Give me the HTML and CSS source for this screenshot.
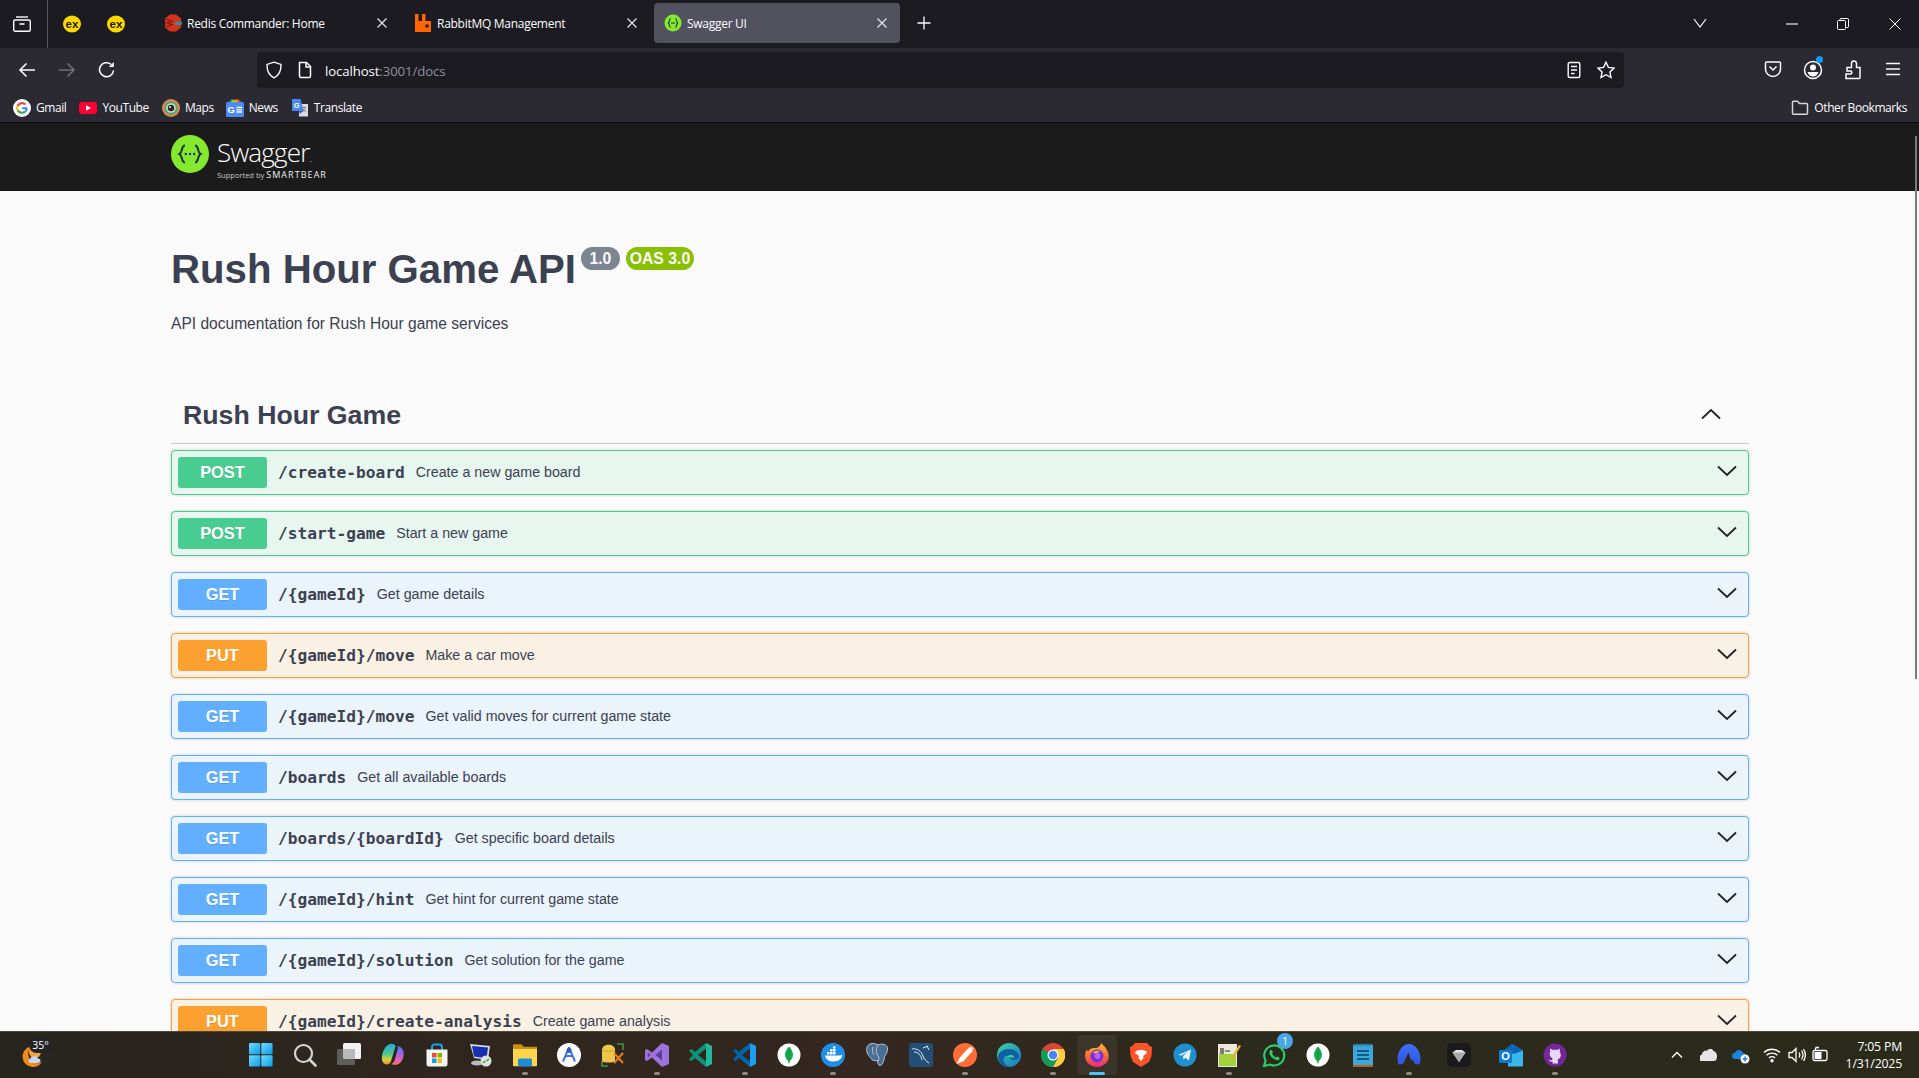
FILE: index.html
```html
<!DOCTYPE html>
<html lang="en">
<head>
<meta charset="utf-8">
<title>Swagger UI</title>
<link rel="stylesheet" href="styles.css">
</head>
<body>
<svg class="defs" width="0" height="0" aria-hidden="true">
  <defs>
    <symbol id="ex" viewBox="0 0 18 18"><ellipse cx="9" cy="9" rx="9" ry="8.600" fill="#ffd800"/><text x="9" y="12.600" text-anchor="middle" font-family="Liberation Sans" font-size="11.500" font-weight="700" fill="#1c1b22">ex</text></symbol>
    <symbol id="close" viewBox="0 0 12 12"><path d="M1.500 1.500l9 9M10.500 1.500l-9 9" stroke="#e4e4ea" stroke-width="1.200" fill="none"/></symbol>
    <symbol id="chev" viewBox="0 0 20 12"><path d="M1 1.500l9 8.500 9-8.500" stroke="#222" stroke-width="1.800" fill="none"/></symbol>
    <symbol id="mongo" viewBox="0 0 24 24"><circle cx="12" cy="12" r="11.500" fill="#fff"/><path d="M12 3.500c2.700 3 4 5.600 4 8.300 0 3-1.600 5.200-3.400 6.300l-.3 2.400h-.7l-.3-2.400C9.600 17 8 14.800 8 11.800 8 9.100 9.300 6.500 12 3.500z" fill="#13aa52"/><path d="M12 4v16" stroke="#0c7a3b" stroke-width=".5"/></symbol>
    <linearGradient id="win" x1="0" y1="0" x2="1" y2="1"><stop offset="0" stop-color="#6fdcff"/><stop offset="1" stop-color="#0b9be8"/></linearGradient>
    <linearGradient id="cop" x1="0" y1="0" x2="0" y2="1"><stop offset="0" stop-color="#1fa8e8"/><stop offset=".5" stop-color="#4fc98a"/><stop offset=".75" stop-color="#d9d03c"/><stop offset="1" stop-color="#f08a3c"/></linearGradient>
    <linearGradient id="cop2" x1="0" y1="0" x2="0" y2="1"><stop offset="0" stop-color="#4a80ea"/><stop offset=".45" stop-color="#a860e6"/><stop offset=".8" stop-color="#ee5fa8"/><stop offset="1" stop-color="#f8824c"/></linearGradient>
    <linearGradient id="edge" x1="0" y1="0" x2="1" y2="1"><stop offset="0" stop-color="#3fd39a"/><stop offset="1" stop-color="#1477c4"/></linearGradient>
    <linearGradient id="fox" x1="0" y1="0" x2="0" y2="1"><stop offset="0" stop-color="#ffbd2e"/><stop offset=".55" stop-color="#ff6a3a"/><stop offset="1" stop-color="#e8287e"/></linearGradient>
    <linearGradient id="nord" x1="0" y1="0" x2="0" y2="1"><stop offset="0" stop-color="#3e6ff5"/><stop offset="1" stop-color="#2f55e0"/></linearGradient>
  </defs>
</svg>

<div class="window">
  <header class="tabbar">
    <div class="tab-toggle">
      <svg class="i18" viewBox="0 0 18 18" fill="none" stroke="#fbfbfe" stroke-width="1.400"><path d="M3 2h12"/><rect x=".7" y="5" width="16.600" height="11.300" rx="1.500"/><path d="M6.500 9h5" stroke-width="1.600"/></svg>
    </div>
    <div class="pinned"><svg class="i18" aria-hidden="true"><use href="#ex"/></svg></div>
    <div class="pinned"><svg class="i18" aria-hidden="true"><use href="#ex"/></svg></div>
    <div class="tabs">
      <div class="tab">
        <svg class="tab-icon" viewBox="0 0 18 18"><path d="M6 .5h6l5 4v9l-5 4H6l-5-4v-9z" fill="#d8321f"/><path d="M2 5l6 2.500L3 9l5 1.500L2 13" stroke="#7d1c12" stroke-width="1.300" fill="none"/><rect x="11" y="7.500" width="7" height="3.500" rx="1" fill="#3d8a96"/></svg>
        <span class="tab-title">Redis Commander: Home</span>
        <svg class="tab-close" aria-hidden="true"><use href="#close"/></svg>
      </div>
      <div class="tab">
        <svg class="tab-icon" viewBox="0 0 18 18"><path d="M1 0h3.500v7H8V0h3.500v7H17v11H1z" fill="#f60"/><rect x="11.500" y="10.500" width="3" height="3" fill="#1c1b22"/></svg>
        <span class="tab-title">RabbitMQ Management</span>
        <svg class="tab-close" aria-hidden="true"><use href="#close"/></svg>
      </div>
      <div class="tab tab-active">
        <svg class="tab-icon" viewBox="0 0 18 18"><circle cx="9" cy="9" r="8.500" fill="#85ea2d"/><path d="M6.800 4.500C5 4.500 5.600 8 4.500 9c1.100 1 .5 4.500 2.300 4.500M11.200 4.500C13 4.500 12.400 8 13.500 9c-1.100 1-.5 4.500-2.300 4.500M7 9h4" stroke="#173647" stroke-width="1.100" fill="none"/></svg>
        <span class="tab-title">Swagger UI</span>
        <svg class="tab-close" aria-hidden="true"><use href="#close"/></svg>
      </div>
    </div>
    <div class="tab-plus"><svg class="i14" viewBox="0 0 14 14"><path d="M7 .5v13M.5 7h13" stroke="#fbfbfe" stroke-width="1.300"/></svg></div>
    <div class="tab-list"><svg class="i14" viewBox="0 0 14 14"><path d="M1 3l6 8 6-8" stroke="#fbfbfe" stroke-width="1.200" fill="none"/></svg></div>
    <div class="win-ctl"><svg class="i12" viewBox="0 0 12 12"><path d="M0 6h12" stroke="#fff" stroke-width="1.100"/></svg></div>
    <div class="win-ctl"><svg class="i12" viewBox="0 0 12 12" fill="none" stroke="#fff" stroke-width="1"><rect x=".5" y="2.500" width="8" height="9" rx="1"/><path d="M3 2.500V1.200c0-.4.300-.7.700-.7h7c.4 0 .8.300.8.700v7.600c0 .4-.4.700-.8.700H8.500"/></svg></div>
    <div class="win-ctl"><svg class="i12" viewBox="0 0 12 12"><path d="M.5.500l11 11M11.500.500l-11 11" stroke="#fff" stroke-width="1"/></svg></div>
  </header>

  <nav class="navbar">
    <div class="nav-btn"><svg class="i18" viewBox="0 0 18 18" fill="none" stroke="#fbfbfe" stroke-width="1.600"><path d="M17 9H2M8.500 2.500L2 9l6.500 6.500"/></svg></div>
    <div class="nav-btn"><svg class="i18" viewBox="0 0 18 18" fill="none" stroke="#6f6f78" stroke-width="1.600"><path d="M1 9h15M9.500 2.500L16 9l-6.500 6.500"/></svg></div>
    <div class="nav-btn"><svg class="i18" viewBox="0 0 18 18" fill="none" stroke="#fbfbfe" stroke-width="1.600"><path d="M15.500 9.500A7 7 0 1 1 13 3.300"/><path d="M15.800 1v5h-5z" fill="#fbfbfe" stroke="none"/></svg></div>
    <div class="urlbar">
      <svg class="i18" viewBox="0 0 18 18" fill="none" stroke="#fbfbfe" stroke-width="1.400"><path d="M9 1.200l7 2.200c.2 6.500-2 11-7 13.400C4 14.400 1.800 9.900 2 3.400z"/></svg>
      <svg class="i18 url-page" viewBox="0 0 18 18" fill="none" stroke="#fbfbfe" stroke-width="1.500"><path d="M3.500 1.500h7l4 4v9.500a1.500 1.500 0 0 1-1.500 1.500H5A1.500 1.500 0 0 1 3.500 15z"/><path d="M10 1.500v4.500h4.500" /></svg>
      <span class="url-text">localhost<span class="url-dim">:3001/docs</span></span>
      <svg class="i18 url-reader" viewBox="0 0 18 18" fill="none" stroke="#fbfbfe" stroke-width="1.400"><rect x="3.200" y="1.500" width="11.600" height="15" rx="1.500"/><path d="M6 5.500h6M6 9h6M6 12.500h3.500" stroke-width="1.600"/></svg>
      <svg class="i18 url-star" viewBox="0 0 18 18" fill="none" stroke="#fbfbfe" stroke-width="1.400"><path d="M9 1.200l2.400 5.200 5.700.7-4.200 3.800 1.100 5.600L9 13.700l-5 2.800 1.100-5.600L.9 7.100l5.700-.7z"/></svg>
    </div>
    <div class="nav-right">
      <div class="nav-btn"><svg class="i18" viewBox="0 0 18 18" fill="none" stroke="#fbfbfe" stroke-width="1.500"><path d="M2.500 2h13c.6 0 1 .4 1 1v6a7.500 7.500 0 0 1-15 0V3c0-.6.400-1 1-1z"/><path d="M5.500 6.500L9 10l3.500-3.500"/></svg></div>
      <div class="nav-btn nav-account"><svg class="i20" viewBox="0 0 20 20" fill="none"><circle cx="10" cy="10" r="8.500" stroke="#fbfbfe" stroke-width="1.500"/><circle cx="10" cy="7.500" r="3" fill="#fbfbfe"/><path d="M4.500 12h11c-.8 3-3 4.600-5.500 4.600S5.300 15 4.500 12z" fill="#fbfbfe"/></svg></div>
      <div class="nav-btn"><svg class="i20" viewBox="0 0 20 20" fill="none" stroke="#fbfbfe" stroke-width="1.500"><path d="M3 18.500h13c.6 0 1-.4 1-1V7.500h-3.500V3.500a2.500 2.500 0 0 0-5 0v4H4v3.500h3.500c1.800 0 1.800 3 0 3H3z"/></svg></div>
      <div class="nav-btn"><svg class="i18" viewBox="0 0 18 18" stroke="#fbfbfe" stroke-width="1.500"><path d="M2 3.500h14M2 9h14M2 14.500h14"/></svg></div>
    </div>
  </nav>

  <div class="bookmarks">
    <div class="bm">
      <svg class="i18" viewBox="0 0 18 18"><circle cx="9" cy="9" r="9" fill="#fff"/><path d="M14 9.200H9.200" stroke="#4285f4" stroke-width="2.100"/><path d="M13.800 9.200a4.900 4.900 0 0 1-2 3.700" stroke="#4285f4" stroke-width="2.100" fill="none"/><path d="M11.800 12.900A5 5 0 0 1 4.600 11.200" stroke="#34a853" stroke-width="2.100" fill="none"/><path d="M4.600 11.200a5 5 0 0 1 0-4.400" stroke="#fbbc05" stroke-width="2.100" fill="none"/><path d="M4.600 6.800A5 5 0 0 1 12.400 5.500" stroke="#ea4335" stroke-width="2.100" fill="none"/></svg>
      <span>Gmail</span>
    </div>
    <div class="bm">
      <svg class="i18" viewBox="0 0 18 18"><rect y="3" width="18" height="12" rx="3" fill="#ff0033"/><path d="M7 6.200L12 9l-5 2.800z" fill="#fff"/></svg>
      <span>YouTube</span>
    </div>
    <div class="bm">
      <svg class="i18" viewBox="0 0 18 18"><circle cx="9" cy="9" r="9" fill="#e08a45"/><circle cx="9" cy="9" r="6.800" fill="#4aa58a"/><circle cx="9" cy="9" r="4.800" fill="#e2d3a8"/><circle cx="9" cy="9" r="3.200" fill="#1e2c30"/><circle cx="8" cy="8" r=".9" fill="#fff"/></svg>
      <span>Maps</span>
    </div>
    <div class="bm bm-news">
      <svg class="i18" viewBox="0 0 18 18"><path d="M3 3l2-2.500h7L15 3z" fill="#34a853"/><path d="M9 .5h3.500L15 3H9z" fill="#ea4335"/><path d="M6 1.500h6V3H6z" fill="#fbbc05"/><rect y="3" width="18" height="15" rx="1.500" fill="#4b8bf5"/><text x="5" y="14" text-anchor="middle" font-family="Liberation Sans" font-size="9.500" font-weight="700" fill="#fff">G</text><path d="M10.500 8.500H16M10.500 10.800H16M10.500 13H16" stroke="#fff" stroke-width="1.300"/></svg>
      <span>News</span>
    </div>
    <div class="bm">
      <svg class="i18" viewBox="0 0 18 18"><path d="M8 5h9v12.500H8z" fill="#d9dbe0"/><path d="M11 8.500h4M13 7.500v1M11.500 13l3-3.500M12 10l3 3" stroke="#777" stroke-width=".9" fill="none"/><path d="M1 0h8.500l3 12H1z" fill="#4a88f0"/><text x="5.500" y="8.500" text-anchor="middle" font-family="Liberation Sans" font-size="7.500" font-weight="700" fill="#fff">G</text><path d="M8 12l1 3 3-3z" fill="#2f5fbd"/></svg>
      <span>Translate</span>
    </div>
    <div class="bm bm-other">
      <svg class="i18" viewBox="0 0 18 18" fill="none" stroke="#d7d7db" stroke-width="1.500"><path d="M1.500 3.200c0-.6.400-1 1-1h3.800l2.200 2.200h7c.6 0 1 .4 1 1v8.800c0 .6-.4 1-1 1h-13c-.6 0-1-.4-1-1z"/></svg>
      <span>Other Bookmarks</span>
    </div>
  </div>

  <main class="viewport">
    <div class="topbar">
      <svg class="logo-mark" viewBox="0 0 38 38"><circle cx="19" cy="19" r="19" fill="#85ea2d"/><path d="M14 10.500c-4 0-2.300 7-5.500 8.500 3.200 1.500 1.500 8.500 5.500 8.500M24 10.500c4 0 2.300 7 5.500 8.500-3.200 1.500-1.500 8.500-5.500 8.500" stroke="#173647" stroke-width="2" fill="none"/><circle cx="14.800" cy="19" r="1.200" fill="#173647"/><circle cx="19" cy="19" r="1.200" fill="#173647"/><circle cx="23.200" cy="19" r="1.200" fill="#173647"/></svg>
      <div class="logo-text">
        <div class="logo-name">Swagger<span class="logo-tm">.</span></div>
        <div class="logo-sub"><span class="logo-by">Supported by</span><span class="logo-sb">SMARTBEAR</span></div>
      </div>
    </div>

    <div class="content">
      <div class="info">
        <h1 class="title">Rush Hour Game API</h1>
        <span class="pill pill-ver">1.0</span>
        <span class="pill pill-oas">OAS 3.0</span>
      </div>
      <p class="desc">API documentation for Rush Hour game services</p>

      <div class="tag">
        <h2 class="tag-name">Rush Hour Game</h2>
        <svg class="tag-chev" viewBox="0 0 20 12"><path d="M1 10.500l9-8.500 9 8.500" stroke="#222" stroke-width="1.800" fill="none"/></svg>
      </div>

      <div class="op op-post"><span class="method">POST</span><span class="path">/create-board</span><span class="summary">Create a new game board</span><svg class="op-chev" aria-hidden="true"><use href="#chev"/></svg></div>
      <div class="op op-post"><span class="method">POST</span><span class="path">/start-game</span><span class="summary">Start a new game</span><svg class="op-chev" aria-hidden="true"><use href="#chev"/></svg></div>
      <div class="op op-get"><span class="method">GET</span><span class="path">/{gameId}</span><span class="summary">Get game details</span><svg class="op-chev" aria-hidden="true"><use href="#chev"/></svg></div>
      <div class="op op-put"><span class="method">PUT</span><span class="path">/{gameId}/move</span><span class="summary">Make a car move</span><svg class="op-chev" aria-hidden="true"><use href="#chev"/></svg></div>
      <div class="op op-get"><span class="method">GET</span><span class="path">/{gameId}/move</span><span class="summary">Get valid moves for current game state</span><svg class="op-chev" aria-hidden="true"><use href="#chev"/></svg></div>
      <div class="op op-get"><span class="method">GET</span><span class="path">/boards</span><span class="summary">Get all available boards</span><svg class="op-chev" aria-hidden="true"><use href="#chev"/></svg></div>
      <div class="op op-get"><span class="method">GET</span><span class="path">/boards/{boardId}</span><span class="summary">Get specific board details</span><svg class="op-chev" aria-hidden="true"><use href="#chev"/></svg></div>
      <div class="op op-get"><span class="method">GET</span><span class="path">/{gameId}/hint</span><span class="summary">Get hint for current game state</span><svg class="op-chev" aria-hidden="true"><use href="#chev"/></svg></div>
      <div class="op op-get"><span class="method">GET</span><span class="path">/{gameId}/solution</span><span class="summary">Get solution for the game</span><svg class="op-chev" aria-hidden="true"><use href="#chev"/></svg></div>
      <div class="op op-put"><span class="method">PUT</span><span class="path">/{gameId}/create-analysis</span><span class="summary">Create game analysis</span><svg class="op-chev" aria-hidden="true"><use href="#chev"/></svg></div>
    </div>
    <div class="scrollthumb"></div>
  </main>

  <footer class="taskbar">
    <div class="weather">
      <svg class="i24" viewBox="0 0 24 24"><path d="M11 3a10.500 10.500 0 1 0 9 16A9 9 0 0 1 11 3z" fill="#f08a1d"/><circle cx="13" cy="9" r="6" fill="#f5a53a"/><path d="M9 20c-2.500 0-3.500-3.500-.5-4.500.5-3 6.500-3 7.500 0 3.500 0 3.500 4.500 0 4.500z" fill="#c5d9f2"/></svg>
      <span class="weather-temp">35°</span>
    </div>
    <div class="dock">
      <div class="slot"><svg class="i24" viewBox="0 0 24 24" fill="url(#win)"><rect width="11.300" height="11.300" rx="1"/><rect x="12.300" width="11.300" height="11.300" rx="1"/><rect y="12.300" width="11.300" height="11.300" rx="1"/><rect x="12.300" y="12.300" width="11.300" height="11.300" rx="1"/></svg></div>
      <div class="slot"><svg class="i24" viewBox="0 0 24 24" fill="none" stroke="#d6d6d6" stroke-width="2.200"><circle cx="10.500" cy="10.500" r="8.500"/><path d="M16.500 16.500l6 6" stroke-width="2.600" stroke-linecap="round"/></svg></div>
      <div class="slot"><svg class="i24" viewBox="0 0 24 24"><rect x="6" y="0" width="18" height="16" rx="1.500" fill="#f2f2f2"/><rect x="0" y="6" width="18" height="16" rx="1.500" fill="#5e5e5e"/><rect x="6" y="6" width="12" height="10" rx="1" fill="#b9b9b9"/></svg></div>
      <div class="slot"><svg class="i24" viewBox="0 0 24 24"><path d="M7 2c3-2 7-1.500 7.500 1.500L10 18c-.7 2.500-2.500 4-5 3.500C1.500 20.500.5 17 1 13 1.500 8 4 4 7 2z" fill="url(#cop)"/><path d="M14 3c3-.5 6.500.5 8 4 1.500 4 .5 9.500-2.500 12.500-2.500 2.500-6 3-9 1.500 2-1 3-3 3.500-5l3-11C17.500 3.700 16 3 14 3z" fill="url(#cop2)"/></svg></div>
      <div class="slot"><svg class="i24" viewBox="0 0 24 24"><path d="M7 7V4a2.500 2.500 0 0 1 2.500-2.500h5A2.500 2.500 0 0 1 17 4v3" stroke="#1aa3e8" stroke-width="2" fill="none"/><path d="M1.500 6.500h21V21a2.500 2.500 0 0 1-2.500 2.500H4A2.500 2.500 0 0 1 1.500 21z" fill="#f4f4f4"/><rect x="7" y="10" width="4.500" height="4.500" fill="#f25022"/><rect x="12.500" y="10" width="4.500" height="4.500" fill="#7fba00"/><rect x="7" y="15.500" width="4.500" height="4.500" fill="#00a4ef"/><rect x="12.500" y="15.500" width="4.500" height="4.500" fill="#ffb900"/></svg></div>
      <div class="slot"><svg class="i24" viewBox="0 0 24 24"><path d="M1 1l20 2-2 14-14-2z" fill="#d5dae6"/><path d="M3 3l16 1.500-1.500 11L5 13.500z" fill="#1a2fb0"/><ellipse cx="8" cy="20" rx="6" ry="2.500" fill="#bbb"/><circle cx="17" cy="18" r="5.500" fill="#dfe3e0"/><path d="M14 20l2.500-2M20 16l-2.500 2" stroke="#2e9e4a" stroke-width="1.300"/></svg></div>
      <div class="slot run"><svg class="i24" viewBox="0 0 24 24"><path d="M0 2.500c0-.8.500-1.300 1.300-1.300h7l2.500 2.500h13.200V23H0z" fill="#c98f10"/><path d="M0 6h24v16c0 .8-.5 1.300-1.300 1.300H1.300C.5 23.300 0 22.800 0 22z" fill="#fdd64b"/><rect x="5" y="15.500" width="14" height="7.800" rx="1.500" fill="#1c8fd8"/></svg></div>
      <div class="slot"><svg class="i24" viewBox="0 0 24 24"><circle cx="12" cy="12" r="12" fill="#fff"/><path d="M12 4.500l-6 14M12 4.500l6 14M8 13h8" stroke="#3f75dd" stroke-width="2" fill="none"/><circle cx="12" cy="7.500" r="2.500" fill="#2f5fbd"/></svg></div>
      <div class="slot"><svg class="i24" viewBox="0 0 24 24"><path d="M1 7c0-7 13-7 13 0v11c0 2-13 2-13 0z" fill="#eec64a"/><path d="M1 6c0 3 13 3 13 0" stroke="#c9a02c" fill="none"/><path d="M16 1h6v6M1 18v5h6" stroke="#3e9a3e" stroke-width="1.600" fill="none"/><path d="M13 10l9 10M22 10l-9 10" stroke="#e37a1e" stroke-width="2.200"/></svg></div>
      <div class="slot run"><svg class="i24" viewBox="0 0 24 24"><path d="M17 0l7 3v18l-7 3-10-9.500L2 18l-2-1V7l2-1 5 3.500z" fill="#9b73d9"/><path d="M17 6.500L10.500 12l6.500 5.500zM2.800 9.500v5L5.500 12z" fill="#5b3a9e"/></svg></div>
      <div class="slot"><svg class="i24" viewBox="0 0 24 24"><path d="M17 0l6 3v18l-6 3z" fill="#1fb89a"/><path d="M17 0v5.500L9 12l8 6.500V24L6 15l-3.500 3L0 16.500 4 12 0 7.500 2.500 6 6 9z" fill="#0d9379"/></svg></div>
      <div class="slot run"><svg class="i24" viewBox="0 0 24 24"><path d="M17 0l6 3v18l-6 3z" fill="#1f9cf0"/><path d="M17 0v5.500L9 12l8 6.500V24L6 15l-3.500 3L0 16.500 4 12 0 7.500 2.500 6 6 9z" fill="#0065a9"/></svg></div>
      <div class="slot"><svg class="i24" aria-hidden="true"><use href="#mongo"/></svg></div>
      <div class="slot run"><svg class="i24" viewBox="0 0 24 24"><circle cx="12" cy="12" r="12" fill="#1d8fe8"/><path d="M4 12.500h14.500c1 0 2-.5 2.500-1 .5 3-2.500 7-8 7-5 0-8-2-9-6z" fill="#fff"/><path d="M6 9h2.500v2.500H6zM9 9h2.500v2.500H9zM12 9h2.500v2.500H12zM9 6h2.500v2.500H9zM12 6h2.500v2.500H12zM12 3.500h2.500V5.500H12z" fill="#fff"/></svg></div>
      <div class="slot"><svg class="i24" viewBox="0 0 24 24" fill="#4a6f94" stroke="#b9c7d6" stroke-width="1"><path d="M5 1c3-1 6-.5 8 1 3-1.500 7.500-1 9 1.500 1.500 3-.5 8-2.500 10-.3 4-2 9-4.500 9-2 0-2.500-3-2.500-5-3 .5-5.500 0-6.500-2-1-1.500-1.500-2-3-4C1 8 1 2.500 5 1z"/><path d="M13 2c-2 3-2.500 7 0 11 1 1.500 1 3 .5 5M8 4c-1 3-.5 6 1 8" fill="none"/></svg></div>
      <div class="slot"><svg class="i24" viewBox="0 0 24 24"><rect width="24" height="24" rx="3" fill="#234e75"/><path d="M3 6c5-1 9 2 11 7 1 3 3 5 6 7M5 9c4 0 7 3 8 8M14 5l5-2M18 3l2 4" stroke="#e2ecf5" stroke-width="1" fill="none"/></svg></div>
      <div class="slot run"><svg class="i24" viewBox="0 0 24 24"><circle cx="12" cy="12" r="12" fill="#ff6c37"/><path d="M5 19.500l5-2 9-10-2.500-2.500-9 10zM18 4l2 2" stroke="#fff" stroke-width="1.500" fill="#fff"/></svg></div>
      <div class="slot"><svg class="i24" viewBox="0 0 24 24"><circle cx="12" cy="12" r="12" fill="url(#edge)"/><path d="M1 13C3 5 18 3 22 12c1 3-2 5-5 5-4 0-3-3-5-4-3-1-6 1-5.500 4 .5 3 3 6 7 7C7 25 1 21 1 13z" fill="#0f5ea8"/><path d="M10 14c2-3 7-2 7 0 0 1-2 1-3 0z" fill="#3fd39a"/></svg></div>
      <div class="slot run"><svg class="i24" viewBox="0 0 24 24"><circle cx="12" cy="12" r="12" fill="#db4437"/><path d="M12 12L1.600 6A12 12 0 0 0 12 24l5-9z" fill="#0f9d58"/><path d="M12 6h10.700A12 12 0 0 1 12 24l5.200-9z" fill="#ffcd40"/><circle cx="12" cy="12" r="5.500" fill="#fff"/><circle cx="12" cy="12" r="4.300" fill="#4285f4"/></svg></div>
      <div class="slot slot-active"><svg class="i24" viewBox="0 0 24 24"><path d="M16.500 0c.5 2 3 3 4.500 5.500 3 4 3.500 9.500 1.500 12.500C20 22 16 24 12 24 5 24 0 19 0 12.500c0-2.500 1-5 2-6 0 1 .5 1.500 1.500 1.500C5 5 8 5 10 5c2 .5 5-1 6.500-5z" fill="url(#fox)"/><circle cx="12" cy="13" r="6.500" fill="#7a2fd0"/><path d="M8 10c1-2.500 5-3 7-1-2 0-3 1-3.500 1.500z" fill="#ffb02e"/><circle cx="12.500" cy="13" r="3" fill="#b562ff"/></svg></div>
      <div class="slot"><svg class="i24" viewBox="0 0 24 24"><path d="M6 0h12l2.500 3L23 4l-.5 9L20 19l-8 5-8-5-2.500-6L1 4l2.500-1z" fill="#fb542b"/><path d="M7 8l3-1h4l3 1 1 2-4 3 .5 2L12 18l-2.500-3 .5-2-4-3z" fill="#fff"/></svg></div>
      <div class="slot"><svg class="i24" viewBox="0 0 24 24"><circle cx="12" cy="12" r="11.500" fill="#1f8fd0"/><path d="M5 12l13-5.500-2 11-3.700-2.800-1.800 2-.5-3.600 5-4.600-6.500 4z" fill="#e7f3fa"/></svg></div>
      <div class="slot run"><svg class="i24" viewBox="0 0 24 24"><path d="M1 1h19v23H1z" fill="#ece9d8"/><path d="M2 11h17v12H2z" fill="#9fd13f"/><path d="M4 5v6M6 5v6M8 8h5" stroke="#333" stroke-width="1.200"/><path d="M22 2L14 15l-1 3 3-2 8-13z" fill="#e9b13b"/></svg></div>
      <div class="slot slot-wa">
        <svg class="i24" viewBox="0 0 24 24" fill="none"><path d="M2 23l1.600-5.500A10 10 0 1 1 8 21.500z" stroke="#25d366" stroke-width="2.100"/><path d="M8 7.500c-1.500 2 0 5.500 3 7.800s5.500 2.500 6.500 1c.6-1-.2-1.800-2-2.800l-1.500 1c-2-1-3-2-4-4l1-1.500C10 7.500 9 6.300 8 7.500z" fill="#25d366"/></svg>
        <span class="wa-badge">1</span>
      </div>
      <div class="slot"><svg class="i24" aria-hidden="true"><use href="#mongo"/></svg></div>
      <div class="slot slot-g1"><svg class="i24" viewBox="0 0 24 24"><rect x="2" y="1.500" width="20" height="22.500" rx="1" fill="#3fa6d8"/><rect x="2" y="22" width="20" height="2" fill="#b5651d"/><path d="M3.500.500v3M6.500.500v3M9.500.500v3M12.500.500v3M15.500.500v3M18.500.500v3" stroke="#1f7fb0" stroke-width="1.200"/><path d="M6 8h12M6 12h12M6 16h12" stroke="#0f5d8a" stroke-width="2"/></svg></div>
      <div class="slot run slot-g2"><svg class="i24" viewBox="0 0 24 24"><path d="M1.500 21.500C-2 12 4 1 12 1s14 11 10.500 20.500L18 21l-3-5-1 1.500L11.500 9.500 6 21z" fill="url(#nord)"/></svg></div>
      <div class="slot slot-g3"><svg class="i24" viewBox="0 0 24 24"><rect width="24" height="24" rx="5" fill="#1a1a1d"/><path d="M5.500 9.500L9 7h6l3.500 2.500L12 19z" fill="#e7e7e7"/><path d="M5.500 9.500h13L12 19z" fill="#a9a9a9"/></svg></div>
      <div class="slot slot-g4"><svg class="i24" viewBox="0 0 24 24"><path d="M13 1l11 6.500V22c0 1-.5 1.500-1.500 1.500H9V15H6V7z" fill="#38b8ea"/><path d="M13 1L6 7l9 4 9-3.500z" fill="#0b64b8"/><rect y="7" width="13" height="13" rx="1.500" fill="#0f7ad0"/><text x="6.500" y="17" text-anchor="middle" font-family="Liberation Sans" font-size="11" font-weight="700" fill="#fff">O</text></svg></div>
      <div class="slot run"><svg class="i24" viewBox="0 0 24 24"><circle cx="12" cy="12" r="11.500" fill="#74269a"/><path d="M7.500 5.500L10 7c1.300-.3 2.700-.3 4 0l2.500-1.500c.5 1.300.5 2.500.2 3.500 2 2 1.500 6.500-2.200 7.500.7.700.5 2 .5 4h-5.500c0-1 0-1.500.2-2-1.700.5-3 0-4-2 1.300.3 2.500 1 3.300.5.100-.7.200-1 .7-1.500C6.500 14 6 10 7.300 9c-.3-1-.3-2.200.2-3.500z" fill="#e8d8f0"/></svg></div>
    </div>
    <div class="tray">
      <svg class="i12" viewBox="0 0 12 12" fill="none" stroke="#fff" stroke-width="1.300"><path d="M1 8.500l5-5 5 5"/></svg>
      <svg class="i18 tray-cloud" viewBox="0 0 18 18"><path d="M2 15a3 3 0 0 1-.5-6c.5-3 3-5 6-4.500 1-2 5-2 6 .5 2.500.5 3.500 3 3.500 5 0 3-1 5-3 5z" fill="#e5e5e5"/></svg>
      <svg class="i18 tray-od" viewBox="0 0 18 18"><path d="M3 13a3 3 0 0 1 0-6c.5-3 6-5 8 0 3 0 4 4 1 6z" fill="#1c84e0"/><circle cx="13" cy="13" r="4.500" fill="#fff"/><path d="M10.500 13h5M13 10.500v5" stroke="#1c84e0" stroke-width="1.500"/></svg>
      <svg class="i18 tray-wifi" viewBox="0 0 18 18" fill="none" stroke="#fff" stroke-width="1.400"><path d="M1 6.500a11.500 11.500 0 0 1 16 0M3.500 9.300a8 8 0 0 1 11 0M6 12a4.300 4.300 0 0 1 6 0"/><circle cx="9" cy="14.800" r="1" fill="#fff"/></svg>
      <svg class="i18 tray-vol" viewBox="0 0 18 18" fill="none" stroke="#fff" stroke-width="1.300"><path d="M1 6.500h3l4-4v13l-4-4H1zM11 6.500c1 1.500 1 3.500 0 5M13.500 4.500c2 3 2 6 0 9M15.500 3c2.500 4 2.500 8 0 12"/></svg>
      <svg class="i18 tray-bat" viewBox="0 0 18 18" fill="none" stroke="#fff" stroke-width="1.300"><rect x="2" y="4.500" width="14" height="10" rx="1.500"/><rect x="3.500" y="6" width="7" height="7" fill="#fff" stroke="none"/><path d="M4 4.500l1-3h3"/></svg>
      <div class="clock"><span>7:05 PM</span><span>1/31/2025</span></div>
    </div>
  </footer>
</div>
</body>
</html>
```

FILE: styles.css
```css
* { box-sizing: border-box; }
html, body { margin: 0; padding: 0; height: 100%; overflow: hidden; }
body { background: #1c1b22; font-family: "Liberation Sans", Arial, sans-serif; }
svg { display: block; flex: none; }
.defs { position: absolute; }
.i12 { width: 12px; height: 12px; }
.i14 { width: 14px; height: 14px; }
.i18 { width: 18px; height: 18px; }
.i20 { width: 20px; height: 20px; }
.i24 { width: 24px; height: 24px; }

.window { display: flex; flex-direction: column; height: 1078px; width: 1919px; }

/* tab strip */
.tabbar { display: flex; align-items: center; height: 48px; padding-bottom: 2px; background: #1c1b22; flex: none; color: #fbfbfe; font-family: "Open Sans", sans-serif; font-size: 12px; }
.tab-toggle { width: 48px; height: 48px; margin-bottom: -2px; display: flex; align-items: center; justify-content: center; border-right: 1px solid #55545c; padding-right: 3px; }
.pinned { width: 44px; display: flex; justify-content: center; margin-bottom: -2px; }
.pinned:nth-child(2) { margin-left: 2px; }
.tabs { display: flex; gap: 4px; margin-left: 16px; }
.tab { width: 246px; height: 40px; display: flex; align-items: center; padding: 0 12px 0 10px; border-radius: 4px; }
.tab-active { background: #52525e; }
.tab-icon { width: 18px; height: 18px; }
.tab-title { margin-left: 5px; flex: 1; white-space: nowrap; letter-spacing: -.28px; }
.tab-close { width: 12px; height: 12px; }
.tab-plus { width: 48px; display: flex; justify-content: center; }
.tab-list { width: 40px; margin-left: auto; margin-right: 46px; display: flex; justify-content: center; }
.win-ctl { width: 51px; display: flex; justify-content: center; margin-bottom: -1px; }
.win-ctl:last-child { padding-left: 2px; }

/* toolbar */
.navbar { display: flex; align-items: center; height: 44px; background: #2b2a33; padding-left: 7px; flex: none; }
.nav-btn { width: 40px; display: flex; justify-content: center; position: relative; }
.nav-account::after { content: ""; position: absolute; top: -4px; left: 23px; width: 7px; height: 7px; border-radius: 50%; background: #0a9df5; }
.urlbar { display: flex; align-items: center; height: 36px; width: 1367px; margin-left: 130px; background: #1c1b22; border-radius: 4px; padding: 0 9px 0 8px; color: #fbfbfe; }
.url-page { margin-left: 13px; }
.url-text { margin-left: 11px; margin-top: 2px; font-family: "Open Sans", sans-serif; font-size: 13.200px; letter-spacing: -.1px; }
.url-dim { color: #8f8f9d; }
.url-reader { margin-left: auto; }
.url-star { margin-left: 14px; }
.nav-right { display: flex; margin-left: auto; padding-right: 6px; }

/* bookmarks */
.bookmarks { display: flex; align-items: center; gap: 13px; height: 31px; background: #2b2a33; border-bottom: 1px solid #0c0c0d; padding: 1px 12px 0 13px; flex: none; color: #fbfbfe; font-family: "Open Sans", sans-serif; font-size: 12px; letter-spacing: -.42px; }
.bm { display: flex; align-items: center; gap: 5px; white-space: nowrap; }
.bm-news { margin-left: -1px; }
.bm-other { margin-left: auto; }

/* page */
.viewport { flex: 1; min-height: 0; overflow: hidden; background: #fafafa; position: relative; color: #3b4151; }
.topbar { height: 68px; background: #1b1b1b; display: flex; align-items: flex-start; padding-left: 171px; }
.logo-mark { width: 38px; height: 38px; margin-top: 12px; }
.logo-text { margin-left: 8px; margin-top: 14px; color: #fff; }
.logo-name { font-family: "Open Sans", sans-serif; font-weight: 300; font-size: 26px; line-height: 30px; letter-spacing: -.8px; }
.logo-tm { font-size: 10px; }
.logo-sub { display: flex; align-items: baseline; gap: 2px; margin-top: -3px; line-height: 10px; }
.logo-by { font-family: "Open Sans", sans-serif; font-size: 7.500px; color: #c8c8c8; }
.logo-sb { font-family: "Open Sans", sans-serif; font-weight: 400; font-size: 9px; letter-spacing: 1.050px; color: #eee; }

.content { padding: 0 170px 0 171px; }
.info { display: flex; align-items: flex-start; padding-top: 55px; }
.title { margin: 0; font-size: 40.200px; line-height: 48px; font-weight: 700; white-space: nowrap; }
.pill { display: block; height: 23px; line-height: 23px; border-radius: 12px; color: #fafafa; font-weight: 700; font-size: 15.800px; text-align: center; margin-top: 1px; }
.pill-ver { width: 39px; margin-left: 5px; background: #7d8492; }
.pill-oas { width: 68px; margin-left: 6px; background: #89bf04; }
.desc { margin: 0; font-size: 15.570px; line-height: 20px; padding-top: 20px; }
.tag { display: flex; align-items: center; height: 110px; padding: 52px 20px 0 12px; border-bottom: 1px solid #c8c9cd; margin-bottom: 6px; }
.tag-name { margin: 0; font-size: 26.700px; line-height: 32px; font-weight: 700; }
.tag-chev { width: 20px; height: 12px; margin-left: auto; margin-right: 8px; margin-top: -2px; }

.op { display: flex; align-items: center; height: 44.500px; margin-bottom: 16.500px; padding: 0 10px 0 6px; border: 1.300px solid; border-radius: 4px; box-shadow: 0 0 3px rgba(0,0,0,.19); }
.method { width: 89px; height: 31px; line-height: 31px; border-radius: 3px; color: #fff; text-align: center; font-weight: 700; font-size: 16.400px; text-shadow: 0 1px 0 rgba(0,0,0,.1); }
.path { margin-left: 11px; font-family: "DejaVu Sans Mono", monospace; font-weight: 700; font-size: 16.200px; color: #3b4151; white-space: nowrap; }
.summary { margin-left: 11px; font-size: 14.250px; color: #3b4151; white-space: nowrap; }
.op-chev { width: 20px; height: 12px; margin-left: auto; margin-right: 1px; margin-top: -3px; }
.op-post { background: #e8f6f0; border-color: #49cc90; }
.op-post .method { background: #49cc90; }
.op-get { background: #ebf3fb; border-color: #61affe; }
.op-get .method { background: #61affe; }
.op-put { background: #faf1e5; border-color: #fca130; }
.op-put .method { background: #fca130; }
.scrollthumb { position: absolute; top: 13px; right: 2px; width: 2px; height: 543px; background: #7b7b7b; }

/* taskbar */
.taskbar { display: flex; align-items: center; height: 47px; flex: none; color: #fff; background: linear-gradient(90deg, #28251f 0%, #2f261e 25%, #33271f 45%, #2c2a1c 65%, #2a2a1b 100%); border-top: 1px solid #4a4742; position: relative; }
.weather { position: relative; margin-left: 22px; }
.weather-temp { position: absolute; left: 7px; top: -5px; width: 23px; height: 15px; background: #22242a; border-radius: 8px; text-align: center; font-family: "Open Sans", sans-serif; font-size: 10.500px; line-height: 15px; white-space: nowrap; }
.dock { display: flex; align-items: center; margin-left: 193px; }
.slot { width: 44px; height: 40px; display: flex; align-items: center; justify-content: center; position: relative; border-radius: 4px; }
.run::after { content: ""; position: absolute; left: 19px; bottom: 0; width: 6px; height: 3px; border-radius: 2px; background: #8b8b8b; }
.slot-active { background: rgba(255,255,255,.06); width: 40px; margin: 0 2px; }
.slot-active::after { content: ""; position: absolute; left: 12px; bottom: 0; width: 16px; height: 3px; border-radius: 2px; background: #4cc2ff; }
.slot-wa { margin-left: 1px; }
.slot-g1 { margin-left: 1px; }
.slot-g2 { margin-left: 2px; }
.slot-g3 { margin-left: 6px; }
.slot-g4 { margin-left: 8px; }
.wa-badge { position: absolute; top: -2px; left: 25px; width: 16px; height: 16px; border-radius: 50%; background: #4aa8e8; color: #fff; font-family: "Open Sans", sans-serif; font-size: 10px; line-height: 16px; text-align: center; }
.tray { display: flex; align-items: center; margin-left: auto; padding-right: 17px; }
.tray-cloud { margin-left: 17px; }
.tray-od { margin-left: 14px; }
.tray-wifi { margin-left: 13px; }
.tray-vol { margin-left: 7px; }
.tray-bat { margin-left: 5px; }
.clock { display: flex; flex-direction: column; align-items: flex-end; width: 56px; margin-left: 17px; font-family: "Open Sans", sans-serif; font-size: 12.300px; line-height: 17px; letter-spacing: -.2px; white-space: nowrap; }
```
